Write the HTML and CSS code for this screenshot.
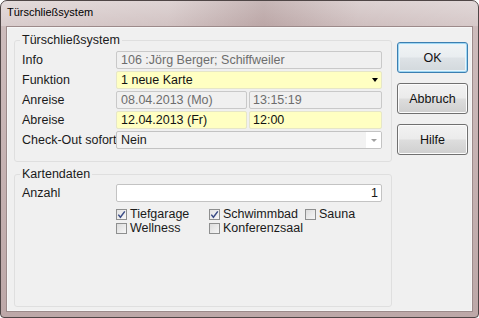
FILE: index.html
```html
<!DOCTYPE html>
<html lang="de">
<head>
<meta charset="utf-8">
<title>Türschließsystem</title>
<link rel="stylesheet" href="styles.css">
</head>
<body>
<div class="window">
  <div class="titlebar">Türschließsystem</div>
  <div class="client">
    <div class="main">
      <fieldset class="group g1">
        <legend>Türschließsystem</legend>
        <div class="row">
          <span class="lbl">Info</span>
          <div class="field disabled full">106 :Jörg Berger; Schiffweiler</div>
        </div>
        <div class="row">
          <span class="lbl">Funktion</span>
          <div class="field yellow full combo"><span class="val">1 neue Karte</span><span class="arrow black"></span></div>
        </div>
        <div class="row">
          <span class="lbl">Anreise</span>
          <div class="pair">
            <div class="field disabled date">08.04.2013 (Mo)</div>
            <div class="field disabled time">13:15:19</div>
          </div>
        </div>
        <div class="row">
          <span class="lbl">Abreise</span>
          <div class="pair">
            <div class="field yellow date">12.04.2013 (Fr)</div>
            <div class="field yellow time">12:00</div>
          </div>
        </div>
        <div class="row">
          <span class="lbl">Check-Out sofort</span>
          <div class="field plain full combo"><span class="val">Nein</span><span class="btnarea"><span class="arrow grey"></span></span></div>
        </div>
      </fieldset>
      <fieldset class="group g2">
        <legend>Kartendaten</legend>
        <div class="row">
          <span class="lbl">Anzahl</span>
          <div class="field white full num">1</div>
        </div>
        <div class="checks">
          <label class="cb"><span class="box checked"><svg viewBox="0 0 11 11" width="11" height="11"><path d="M2.3 5.6 L4.4 8.2 L8.8 2.4" fill="none" stroke="#3b4c86" stroke-width="1.5"/></svg></span>Tiefgarage</label>
          <label class="cb"><span class="box checked"><svg viewBox="0 0 11 11" width="11" height="11"><path d="M2.3 5.6 L4.4 8.2 L8.8 2.4" fill="none" stroke="#3b4c86" stroke-width="1.5"/></svg></span>Schwimmbad</label>
          <label class="cb"><span class="box"></span>Sauna</label>
          <label class="cb"><span class="box"></span>Wellness</label>
          <label class="cb"><span class="box"></span>Konferenzsaal</label>
        </div>
      </fieldset>
    </div>
    <div class="buttons">
      <button class="btn default">OK</button>
      <button class="btn">Abbruch</button>
      <button class="btn">Hilfe</button>
    </div>
  </div>
</div>
</body>
</html>
```
FILE: styles.css
```css
* { box-sizing: border-box; }
html, body { margin: 0; padding: 0; background: #ffffff; }
body {
  font-family: "Liberation Sans Narrow", "Liberation Sans", Arial, sans-serif;
  font-size: 12.5px;
  color: #1a1a1a;
}
.window {
  width: 479px;
  height: 318px;
  border: 1px solid #4f4646;
  border-radius: 7px 7px 4px 4px;
  background: linear-gradient(180deg, #dacfcf 0, #cdbcbc 25px, #c4b0b0 60%, #bda8a8 100%);
  padding: 0 5px 5px 5px;
  display: flex;
  flex-direction: column;
  overflow: hidden;
}
.titlebar {
  height: 25px;
  margin: 0 -5px;
  padding: 5px 0 0 6px;
  font-size: 11px;
  color: #000;
  background: linear-gradient(90deg, rgba(255,255,255,0.25) 0, rgba(255,255,255,0.1) 35%, rgba(110,70,70,0.18) 55%, rgba(255,255,255,0.05) 75%, rgba(255,255,255,0.2) 100%);
}
.client {
  flex: 1;
  background: #f0f0f0;
  border: 1px solid #9c8a8a;
  box-shadow: inset 0 0 0 1px #f7f7f7;
  display: flex;
  padding: 6px 4px 4px 7px;
  gap: 5px;
}
.main {
  width: 378px;
  display: flex;
  flex-direction: column;
  gap: 5px;
}
.group {
  margin: 0;
  border: 1px solid #dfdfdf;
  border-radius: 3px;
  padding: 4px 9px 8px 7px;
  min-width: 0;
}
.group legend {
  padding: 0 2px;
  margin-left: -2px;
  line-height: 14px;
  height: 14px;
}
.g1 { padding-bottom: 10px; }
.g2 { flex: 1; padding-top: 3px; }
.row {
  display: flex;
  align-items: center;
  height: 18px;
  margin-bottom: 2px;
}
.lbl {
  width: 94px;
  flex: none;
  white-space: nowrap;
}
.field {
  height: 18px;
  border: 1px solid #bcbcbc;
  border-radius: 2px;
  padding: 0 4px;
  line-height: 16px;
  white-space: nowrap;
  overflow: hidden;
}
.full { width: 266px; }
.pair { display: flex; gap: 2px; width: 266px; }
.date { width: 131px; }
.time { width: 133px; padding-left: 3px; }
.disabled { background: #f0f0f0; color: #6d6d6d; border-color: #c9c9c9; }
.yellow { background: #ffffc2; color: #111; border-color: #e6e6c8; }
.plain { background: #f2f2f2; border-color: #c3c3c3; }
.white { background: #ffffff; border-color: #c3c3c3; }
.num { text-align: right; padding-right: 3px; }
.combo { display: flex; align-items: center; padding-right: 0; }
.combo .val { flex: 1; }
.arrow {
  width: 0; height: 0;
  border-left: 3.5px solid transparent;
  border-right: 3.5px solid transparent;
  margin-right: 3px;
}
.arrow.black { border-top: 4px solid #000; }
.arrow.grey { border-top: 3px solid #a0a0a0; margin: 0; }
.btnarea {
  width: 15px;
  height: 16px;
  background: #ffffff;
  display: flex;
  align-items: center;
  justify-content: center;
}
.checks {
  display: grid;
  grid-template-columns: 93px 96px auto;
  margin-left: 94px;
  margin-top: 5px;
  row-gap: 0;
}
.cb {
  display: flex;
  align-items: center;
  height: 14px;
  gap: 3px;
  white-space: nowrap;
}
.box {
  width: 11px;
  height: 11px;
  flex: none;
  border: 1px solid #8e8f8f;
  background: linear-gradient(135deg, #dcdcdc, #f6f6f6);
  position: relative;
}
.box.checked { background: linear-gradient(135deg, #e4e4e4, #f7f7f7); }
.box svg { position: absolute; left: -1px; top: -1px; }
.buttons {
  width: 71px;
  display: flex;
  flex-direction: column;
  gap: 10px;
  padding-top: 9px;
}
.btn {
  height: 31px;
  width: 71px;
  font: inherit;
  color: #111;
  border: 1px solid #707070;
  border-radius: 3px;
  background: linear-gradient(180deg, #f2f2f2 0, #ebebeb 48%, #dddddd 52%, #cfcfcf 100%);
  box-shadow: inset 0 0 0 1px #fcfcfc;
  padding: 0;
}
.btn.default {
  border-color: #3c7fb1;
  box-shadow: inset 0 0 0 1px #9fd6f2, inset 0 0 0 2px #e8f5fc;
  background: linear-gradient(180deg, #f1f4f6 0, #e9edf0 48%, #dde2e6 52%, #d2d8dc 100%);
}
```
